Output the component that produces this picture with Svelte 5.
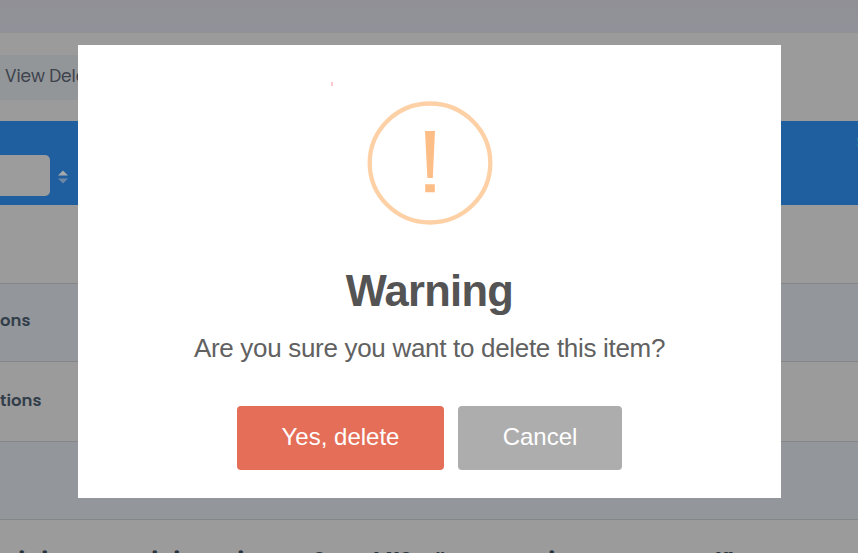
<script>
  const marks = [
    { x: 19, t: 'i' }, { x: 42, t: 'i' }, { x: 152, t: 'i' }, { x: 174, t: 'i' },
    { x: 238, t: 'i' }, { x: 314, t: 'S', cap: true }, { x: 373, t: 't', cap: true }, { x: 386, t: 'NO', cap: true },
    { x: 434, t: '“', cap: true }, { x: 549, t: 'i' }, { x: 715, t: 't”', cap: true }
  ];
</script>

<main class="page">
  <header></header>
  <section class="toolbar"><div class="view">View Deleted</div></section>
  <section class="thead">
    <div class="filter"></div>
    <svg class="sort" width="12" height="14" viewBox="0 0 12 14">
      <path d="M1 5.5 L6 .5 L11 5.5Z" fill="#a5a9ac" />
      <path d="M1 8.5 L6 13.5 L11 8.5Z" fill="#6d87a4" />
    </svg>
    <span class="edge">S</span>
  </section>
  <div class="row first"></div>
  <div class="row alt"><span>ons</span></div>
  <div class="row third"><span>tions</span></div>
  <div class="row alt"></div>
  <div class="row last">
    {#each marks as m}<b class:cap={m.cap} style="left:{m.x}px">{m.t}</b>{/each}
  </div>

  <div class="modal" role="dialog" aria-labelledby="title">
    <i class="speck"></i>
    <svg class="icon" width="126" height="124" viewBox="0 0 126 124">
      <ellipse cx="63" cy="62" rx="60.3" ry="59.5" fill="none" stroke="#fed0a5" stroke-width="4.3" />
      <path d="M58 30H68L65.8 77H60.4Z M58.2 83.3H67.8V91.3H58.2Z" fill="#fcbd86" />
    </svg>
    <h2 id="title">Warning</h2>
    <p>Are you sure you want to delete this item?</p>
    <div class="actions">
      <button class="yes">Yes, delete</button>
      <button class="cancel">Cancel</button>
    </div>
  </div>
</main>

<style>
  :global(body) { margin: 0; }
  .page { position: relative; width: 858px; height: 553px; overflow: hidden; background: #9b9b9b; display: flex; flex-direction: column; font-family: "Liberation Sans", Arial, sans-serif; }
  header { height: 32px; flex: none; background: linear-gradient(#909095, #919299); border-bottom: 1px solid #929292; }
  .toolbar { height: 87.5px; flex: none; box-sizing: border-box; padding-top: 22px; }
  .view { width: 160px; height: 45px; padding-left: 5px; background: #939698; color: #3d424c; font: 17px/42px Poppins, Inter, sans-serif; letter-spacing: -.1px; box-sizing: border-box; white-space: nowrap; }
  .thead { position: relative; height: 84px; flex: none; background: #205f9f; display: flex; align-items: flex-start; }
  .filter { width: 50px; height: 41px; margin-top: 34px; background: #9c9c9c; border-radius: 0 5px 5px 0; }
  .sort { margin: 49px 0 0 7px; }
  .edge { position: absolute; left: 856px; top: 13px; font-size: 14px; color: #168a9b; }
  .row { height: 78.5px; flex: none; box-sizing: border-box; border-bottom: 1px solid #858687; display: flex; align-items: center; color: #333e4b; font: 600 16.5px Poppins, Inter, sans-serif; }
  .row.first { height: 79.5px; }
  .row.alt { background: #93979b; height: 78px; }
  .row.third { height: 80px; }
  .row span { margin-top: -4px; }
  .row.third span { margin-top: -2px; }
  .row.last { position: relative; height: 40px; border: 0; }
  .row b { position: absolute; top: 29px; line-height: 20px; font-size: 17px; color: #2b3540; }
  .row b.cap { top: 28px; }
  .modal { position: absolute; left: 78px; top: 45px; width: 703px; height: 453px; background: #fff; display: flex; flex-direction: column; align-items: center; }
  .speck { position: absolute; left: 253px; top: 37px; width: 2px; height: 4px; background: #fbc8cb; }
  .icon { margin-top: 56px; flex: none; }
  h2 { margin: 41px 0 0; font-size: 43.5px; letter-spacing: -.7px; line-height: 50px; color: #545454; font-weight: 700; }
  p { margin: 16px 0 0; font-size: 26px; letter-spacing: -.31px; line-height: 32px; color: #616161; white-space: nowrap; }
  .actions { display: flex; gap: 14px; margin-top: 42px; }
  button { height: 64px; border: 0; border-radius: 4px; padding: 0 0 2px; color: #fff; font: 24px "Liberation Sans", Arial, sans-serif; }
  .yes { width: 207px; background: #e46e57; }
  .cancel { width: 164px; background: #adadad; }
</style>
